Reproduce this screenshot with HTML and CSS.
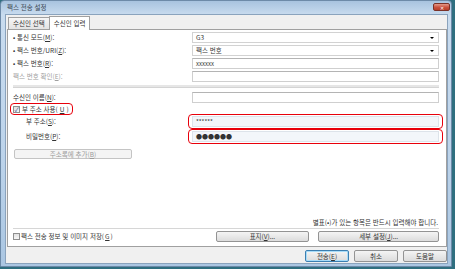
FILE: index.html
```html
<!DOCTYPE html>
<html lang="ko">
<head>
  <meta charset="UTF-8" />
  <title>팩스 전송 설정</title>
  <link rel="stylesheet" href="styles.css">
</head>
<body>
  <div class="window">
    <!-- 제목 표시줄 -->
    <div class="titlebar">
      <span class="title">팩스 전송 설정</span>
      <span class="close">✕</span>
    </div>

    <div class="client">
      <div class="tabs">
        <span class="tab">수신인 선택</span>
        <span class="tab active">수신인 입력</span>
      </div>

      <div class="panel">
        <div class="form">
          <label>• 통신 모드(<u>M</u>):</label>
          <div class="field select">G3<span class="arrow"></span></div>

          <label>• 팩스 번호/URI(<u>Z</u>):</label>
          <div class="field select">팩스 번호<span class="arrow"></span></div>

          <label>• 팩스 번호(<u>R</u>):</label>
          <div class="field">xxxxxx</div>

          <label class="disabled">팩스 번호 확인(<u>E</u>):</label>
          <div class="field"></div>
        </div>

        <div class="separator"></div>

        <div class="form">
          <label>수신인 이름(<u>N</u>):</label>
          <div class="field"></div>
        </div>

        <div class="check-row">
          <span class="mark">
            <span class="checkbox checked">✓</span>부 주소 사용(<u>U</u>)
          </span>
        </div>

        <div class="form sub">
          <label>부 주소(<u>S</u>):</label>
          <div class="mark-field"><div class="field">******</div></div>

          <label>비밀번호(<u>P</u>):</label>
          <div class="mark-field"><div class="field dots">●●●●●●</div></div>
        </div>

        <div class="add-row">
          <span class="button wide disabled">주소록에 추가(<u>B</u>)</span>
        </div>

        <div class="spacer"></div>

        <p class="note">별표(•)가 있는 항목은 반드시 입력해야 합니다.</p>
        <div class="line"></div>

        <div class="bottom-row">
          <span class="save"><span class="checkbox"></span>팩스 전송 정보 및 이미지 저장(<u>G</u>)</span>
          <span class="button cover">표지(<u>V</u>)...</span>
          <span class="button detail">세부 설정(<u>J</u>)...</span>
        </div>
      </div>

      <div class="actions">
        <span class="button default">전송(<u>E</u>)</span>
        <span class="button">취소</span>
        <span class="button">도움말</span>
      </div>
    </div>
  </div>
</body>
</html>
```

FILE: styles.css
```css
* {
  margin: 0;
  padding: 0;
  box-sizing: border-box;
}
body {
  width: 455px;
  height: 269px;
  background: #2f6f80; /* 바탕화면 */
  font-family: "Noto Sans CJK KR", "Noto Sans", sans-serif;
  font-size: 6.5px;
  line-height: 1;
  color: #333;
  overflow: hidden;
}
u {
  text-decoration: underline;
  text-underline-offset: 1px;
}

/* 창 틀 */
.window {
  width: 452px;
  height: 267px;
  background: linear-gradient(#a8c3df, #c9dcef 14px, #bcd3ea 60%, #aac6e2);
  border: 1px solid #6d8aa8;
  border-radius: 4px 4px 0 0;
  display: flex;
  flex-direction: column;
}
.titlebar {
  height: 13px;
  flex-shrink: 0;
  display: flex;
  align-items: center;
  justify-content: space-between;
  padding: 0 1px 0 6px;
}
.title {
  color: #3a4654;
}
.close {
  width: 17px;
  height: 8px;
  margin-top: -1px;
  background: linear-gradient(#e49a8a, #c9513e 55%, #b8402c);
  border: 1px solid #7b3127;
  border-radius: 2px;
  color: #fff;
  font-size: 5px;
  display: flex;
  align-items: center;
  justify-content: center;
}
.client {
  height: 250px;
  margin: 0 3px 0 4px;
  background: #f0f0f0;
  border: 1px solid #8aa3bd;
  display: flex;
  flex-direction: column;
  padding: 0 0 0 1px;
}

/* 탭 */
.tabs {
  display: flex;
  align-items: flex-end;
  height: 14px;
  flex-shrink: 0;
  padding-left: 1px;
}
.tab {
  height: 12px;
  padding: 0 4px;
  display: flex;
  align-items: center;
  background: linear-gradient(#f6f6f6, #e3e3e3);
  border: 1px solid #a0a0a0;
  border-bottom: none;
}
.tab.active {
  height: 14px;
  background: #fff;
  margin-left: -1px;
  position: relative;
  top: 1px;
  z-index: 1;
}

.panel {
  height: 218px;
  flex-shrink: 0;
  background: #fff;
  border: 1px solid #a0a0a0;
  padding: 2px 7px 4px 5px;
  display: flex;
  flex-direction: column;
}

/* 입력 줄 */
.form {
  display: grid;
  grid-template-columns: 179px 1fr;
  row-gap: 2px;
  align-items: center;
}
.form label {
  height: 11px;
  display: flex;
  align-items: center;
}
.disabled {
  color: #a0a0a0;
}
.field {
  height: 11px;
  border: 1px solid #cfcfcf;
  border-top-color: #b4b4b4;
  background: #fff;
  padding: 0 3px;
  display: flex;
  align-items: center;
  font-size: 6px;
}
.select {
  justify-content: space-between;
  border-color: #d2d2d2;
  font-size: 6.5px;
}
.arrow {
  width: 0;
  height: 0;
  border-left: 2px solid transparent;
  border-right: 2px solid transparent;
  border-top: 2px solid #000;
  margin-right: 1px;
}
.separator {
  height: 3px;
  margin: 3px 0 4px;
  background: #e6e6e6;
  border-bottom: 1px solid #d4d4d4;
}

.check-row {
  height: 12px;
  display: flex;
  align-items: center;
  margin-left: -3px;
}
.mark {
  display: flex;
  align-items: center;
  gap: 2px;
  height: 12px;
  padding: 0 3px 0 2px;
  border: 1px solid #e8000b;
  border-radius: 4px;
}
.checkbox {
  width: 7px;
  height: 7px;
  border: 1px solid #8f8f8f;
  background: linear-gradient(#e2e2e2, #f6f6f6);
  font-size: 6px;
  line-height: 5px;
  color: #2a3a7a;
  display: flex;
  justify-content: center;
}

.form.sub {
  row-gap: 0;
  margin-top: -1px;
}
.form.sub label {
  padding-left: 13px;
}
.mark-field {
  margin-left: -4px;
  margin-right: -4px;
  padding: 1px 3px;
  border: 1px solid #e8000b;
  border-radius: 4px;
}
.mark-field .field {
  border-color: #dde3ea;
  background: #f3f6fa;
}

.add-row {
  margin-top: 5px;
}
.button {
  height: 11px;
  display: inline-flex;
  align-items: center;
  justify-content: center;
  background: linear-gradient(#f4f4f4, #e8e8e8 50%, #dcdcdc);
  border: 1px solid #939393;
  border-radius: 2px;
  color: #333;
}
.button.wide {
  width: 118px;
  height: 10px;
  margin-left: 1px;
}
.button.disabled {
  color: #9a9a9a;
  background: #f4f4f4;
  border-color: #c4c4c4;
}

.spacer {
  flex: 1;
}
.note {
  text-align: right;
  padding-right: 1px;
  margin-bottom: 3px;
}
.line {
  height: 1px;
  background: #d6d6d6;
  margin-bottom: 2px;
}
.bottom-row {
  display: flex;
  align-items: center;
}
.save {
  display: flex;
  align-items: center;
  gap: 1px;
  width: 203px;
}
.button.cover {
  width: 94px;
}
.button.detail {
  width: 121px;
  margin-left: 9px;
}

/* 하단 버튼 */
.actions {
  display: flex;
  justify-content: flex-end;
  gap: 5px;
  padding: 3px 0 0 0;
}
.actions .button {
  width: 44px;
  height: 12px;
}
.actions .button.default {
  border-color: #3c7fb1;
  box-shadow: inset 0 0 0 1px #a8dcf8;
}
```
